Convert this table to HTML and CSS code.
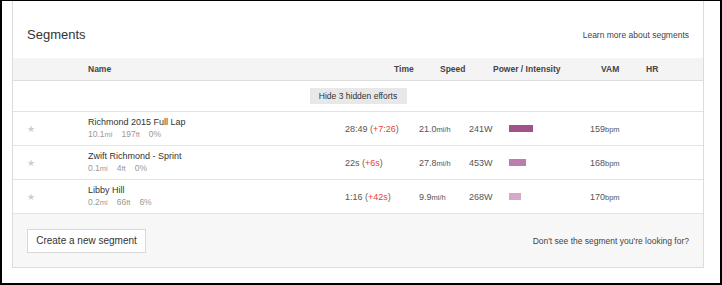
FILE: index.html
```html
<!DOCTYPE html>
<html>
<head>
<meta charset="utf-8">
<link rel="stylesheet" href="styles.css">
</head>
<body>
<div class="frame">
  <section class="panel">
    <header class="panel-head">
      <h2 class="title">Segments</h2>
      <a class="learn">Learn more about segments</a>
    </header>
    <div class="thead">
      <span></span>
      <span>Name</span>
      <span>Time</span>
      <span>Speed</span>
      <span>Power / Intensity</span>
      <span>VAM</span>
      <span>HR</span>
    </div>
    <div class="hidden-row"><button class="hide-btn">Hide 3 hidden efforts</button></div>
    <div class="row">
      <span class="star">★</span>
      <div class="name">
        <div class="seg-title">Richmond 2015 Full Lap</div>
        <div class="seg-stats"><span>10.1<small>mi</small></span><span>197<small>ft</small></span><span>0%</span></div>
      </div>
      <span class="time">28:49 <span class="delta">(<em>+7:26</em>)</span></span>
      <span class="speed">21.0<small>mi/h</small></span>
      <span class="power">241W</span>
      <span class="bar-cell"><span class="bar" style="width:24px;background:#a2528b"></span></span>
      <span class="hr">159<small>bpm</small></span>
    </div>
    <div class="row">
      <span class="star">★</span>
      <div class="name">
        <div class="seg-title">Zwift Richmond - Sprint</div>
        <div class="seg-stats"><span>0.1<small>mi</small></span><span>4<small>ft</small></span><span>0%</span></div>
      </div>
      <span class="time">22s <span class="delta">(<em>+6s</em>)</span></span>
      <span class="speed">27.8<small>mi/h</small></span>
      <span class="power">453W</span>
      <span class="bar-cell"><span class="bar" style="width:17px;background:#bb7dac"></span></span>
      <span class="hr">168<small>bpm</small></span>
    </div>
    <div class="row">
      <span class="star">★</span>
      <div class="name">
        <div class="seg-title">Libby Hill</div>
        <div class="seg-stats"><span>0.2<small>mi</small></span><span>66<small>ft</small></span><span>6%</span></div>
      </div>
      <span class="time">1:16 <span class="delta">(<em>+42s</em>)</span></span>
      <span class="speed">9.9<small>mi/h</small></span>
      <span class="power">268W</span>
      <span class="bar-cell"><span class="bar" style="width:12px;background:#d5a9c9"></span></span>
      <span class="hr">170<small>bpm</small></span>
    </div>
    <footer class="panel-foot">
      <button class="create-btn">Create a new segment</button>
      <span class="dont-see">Don't see the segment you're looking for?</span>
    </footer>
  </section>
</div>
</body>
</html>
```
FILE: styles.css
```css
* { box-sizing: border-box; }
html, body { margin: 0; padding: 0; background: #fff; }
body { font-family: "Liberation Sans", Arial, sans-serif; color: #333; }

.frame {
  width: 722px;
  height: 285px;
  border-style: solid;
  border-color: #000;
  border-width: 1px 2px 2px 2px;
  padding-left: 10px;
}

.panel {
  width: 692px;
  border: 1px solid #dcdcdc;
  border-top: none;
  background: #fff;
}

.panel-head {
  height: 57px;
  display: flex;
  align-items: center;
  justify-content: space-between;
  padding: 10px 14px 0 14px;
}
.title {
  margin: 0;
  font-size: 13px;
  font-weight: normal;
  color: #333;
}
.learn {
  font-size: 8.5px;
  color: #444;
}

.thead {
  height: 23px;
  background: #f4f4f4;
  border-bottom: 1px solid #dedede;
  display: grid;
  grid-template-columns: 75px 306px 46px 53px 108px 45px 1fr;
  align-items: center;
  font-size: 8.5px;
  font-weight: bold;
  color: #444;
}

.hidden-row {
  height: 31px;
  border-bottom: 1px solid #e3e3e3;
  display: flex;
  align-items: center;
  justify-content: center;
}
.hide-btn {
  font-family: inherit;
  font-size: 8.5px;
  color: #333;
  background: #e8e8e8;
  border: none;
  height: 16px;
  width: 97px;
  padding: 0;
}

.row {
  height: 34px;
  border-bottom: 1px solid #e3e3e3;
  display: grid;
  grid-template-columns: 75px 257px 74px 50px 40px 81px 1fr;
  align-items: center;
  font-size: 9px;
  color: #555;
}

.star {
  padding-left: 14px;
  font-size: 9px;
  color: #cdcdcd;
}
.seg-title { font-size: 9px; color: #333; line-height: 12px; }
.seg-stats {
  font-size: 8.5px;
  color: #999;
  line-height: 13px;
  display: flex;
  gap: 9px;
}
small { font-size: 7.5px; }
.delta { color: #666; }
.delta em { font-style: normal; color: #f03a3a; }
.bar-cell { display: flex; align-items: center; }
.bar { display: block; height: 7px; }

.panel-foot {
  height: 53px;
  background: #f7f7f7;
  display: flex;
  align-items: center;
  justify-content: space-between;
  padding: 0 14px;
}
.create-btn {
  font-family: inherit;
  font-size: 10px;
  color: #333;
  background: #fff;
  border: 1px solid #d8d8d8;
  height: 24px;
  width: 119px;
  padding: 0;
}
.dont-see {
  font-size: 8.5px;
  color: #444;
}
```
